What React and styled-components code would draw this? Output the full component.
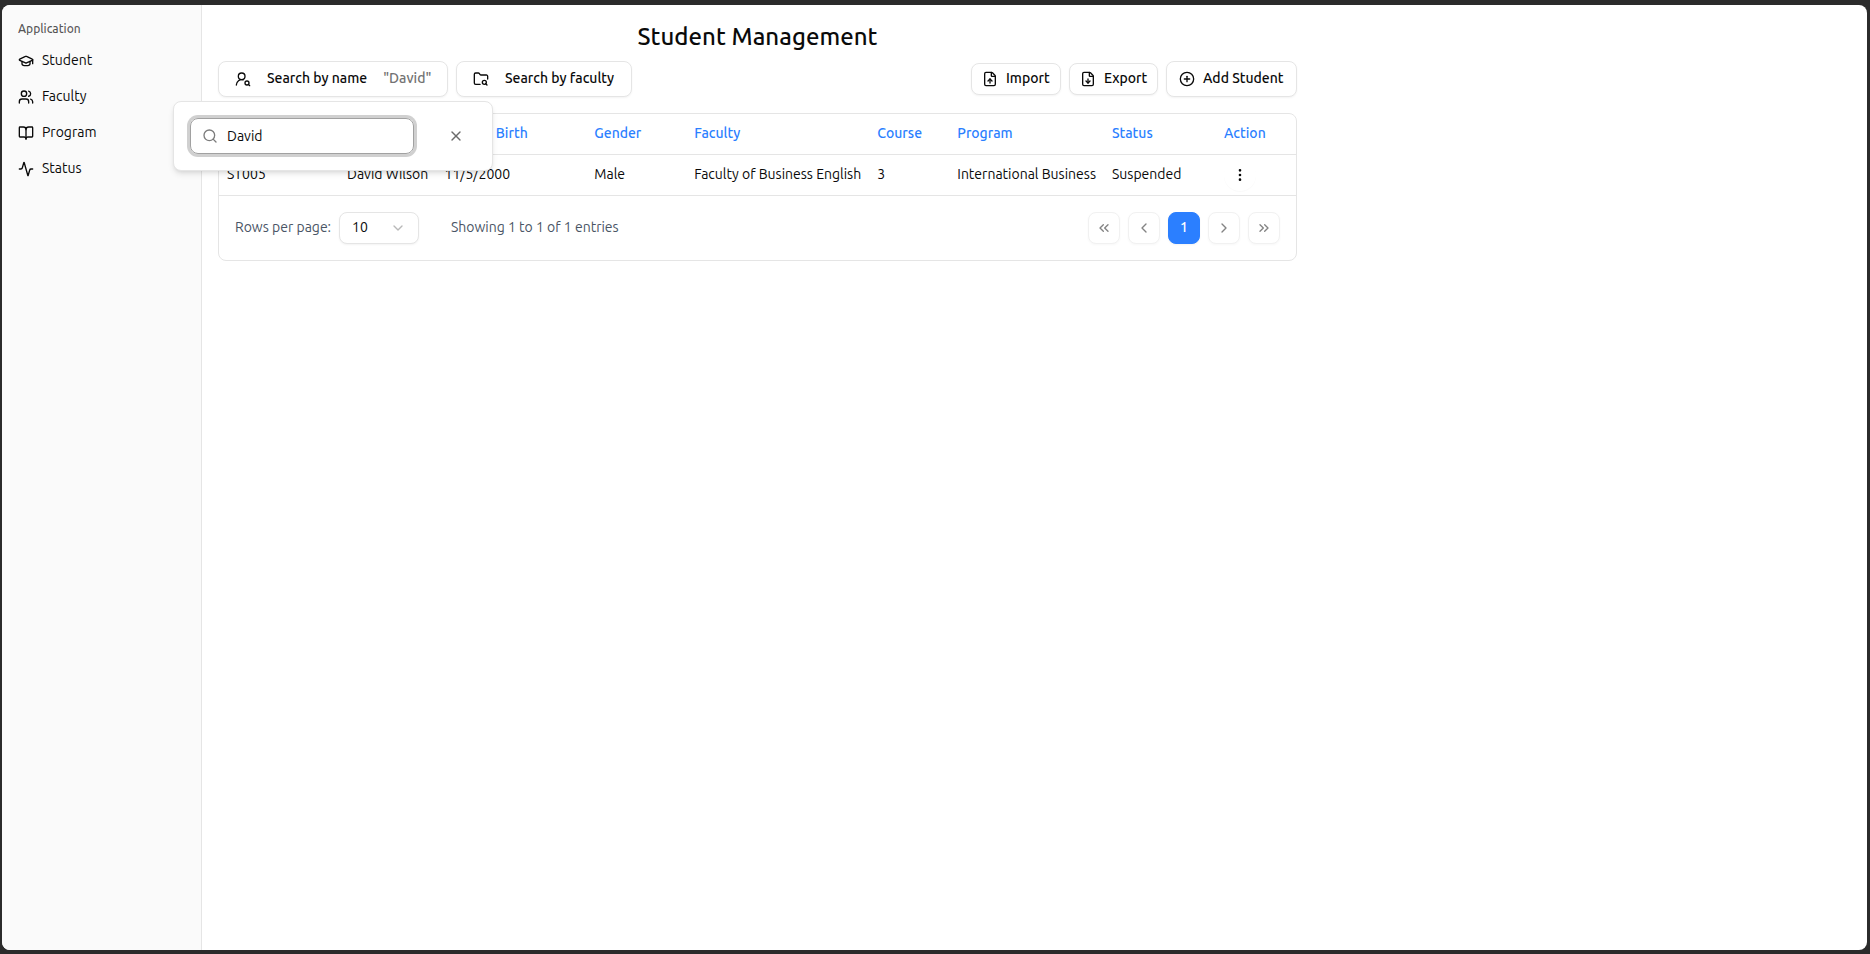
import React from "react";
import styled, { createGlobalStyle } from "styled-components";
import {
  GraduationCap, Users, BookOpen, Activity, UserRoundSearch, FolderSearch,
  FileUp, FileDown, CirclePlus, EllipsisVertical, ChevronsLeft, ChevronLeft,
  ChevronRight, ChevronsRight, ChevronDown, Search, X,
} from "lucide-react";

const Global = createGlobalStyle`
  *, *::before, *::after { box-sizing: border-box; }
  html, body, #root { height: 100%; }
  body {
    margin: 0;
    overflow: hidden;
    background: #2b2b2b;
    color: #0a0a0a;
    font-family: Ubuntu, "Noto Sans", sans-serif;
    font-size: 14px;
    line-height: 20px;
  }
  button, input { font: inherit; color: inherit; margin: 0; }
  svg { flex-shrink: 0; display: block; }
`;

const Frame = styled.div`
  height: 954px;
  padding: 5px 3px 4px 2px;
`;

const Window = styled.div`
  display: flex;
  height: 100%;
  overflow: hidden;
  background: #fff;
  border-radius: 8px;
`;

const Sidebar = styled.aside`
  width: 200px;
  padding: 8px;
  background: #fafafa;
  border-right: 1px solid #e5e5e5;
`;

const SidebarLabel = styled.div`
  height: 32px;
  padding: 0 8px;
  line-height: 32px;
  font-size: 12px;
  font-weight: 500;
  color: rgba(10, 10, 10, 0.7);
`;

const Nav = styled.nav`
  display: flex;
  flex-direction: column;
  gap: 4px;
`;

const NavItem = styled.a`
  display: flex;
  align-items: center;
  gap: 8px;
  height: 32px;
  padding: 0 8px;
`;

const Label = styled.span`
  display: block;
  padding-bottom: 2px;
  white-space: nowrap;
  color: ${(p) => p.$color || "inherit"};
  font-weight: ${(p) => p.$weight || 400};
`;

const Main = styled.main`
  width: 1111px;
  padding: 16px;
`;

const Title = styled.h1`
  margin: 0 0 8px;
  font-size: 24px;
  font-weight: 540;
  letter-spacing: 0.04px;
  line-height: 32px;
  text-align: center;
`;

const Toolbar = styled.div`
  display: flex;
  justify-content: space-between;
  align-items: center;
  margin-bottom: 16px;
`;

const Group = styled.div`
  display: flex;
  align-items: center;
  gap: 8px;
`;

const Button = styled.button`
  display: flex;
  align-items: center;
  gap: ${(p) => p.$gap || 8}px;
  width: ${(p) => p.$w}px;
  height: ${(p) => p.$h || 36}px;
  padding: 0 ${(p) => p.$pad}px;
  background: #fff;
  border: 1px solid #e5e5e5;
  border-radius: 8px;
  box-shadow: 0 1px 2px rgba(0, 0, 0, 0.05);
`;

const Card = styled.section`
  border: 1px solid #e5e5e5;
  border-radius: 8px;
`;

const Row = styled.div`
  display: grid;
  grid-template-columns: 120px 97.5px 149.8px 100px 183px 80px 154.7px 112px 1fr;
  align-items: center;
  height: 41px;
  border-bottom: 1px solid #e5e5e5;
  color: ${(p) => (p.$head ? "#2b7fff" : "inherit")};
`;

const Cell = styled.div`
  padding: 0 8px;
  min-width: 0;
`;

const RoundButton = styled.button`
  display: grid;
  place-items: center;
  width: 32px;
  height: 32px;
  padding: 0;
  border: 0;
  border-radius: 50%;
  background: #fff;
  box-shadow: 0 1px 1px rgba(0, 0, 0, 0.025);
`;

const Footer = styled.footer`
  display: flex;
  justify-content: space-between;
  align-items: center;
  height: 64px;
  padding: 0 16px;
  color: #4a5565;
`;

const Caption = styled.div`
  width: 96px;
`;

const Select = styled.button`
  display: flex;
  align-items: center;
  justify-content: space-between;
  width: 80px;
  height: 32px;
  margin-right: 24px;
  padding: 0 12px;
  background: #fff;
  color: #0a0a0a;
  border: 1px solid #e5e5e5;
  border-radius: 8px;
  box-shadow: 0 1px 2px rgba(0, 0, 0, 0.05);
  svg { opacity: 0.5; color: #737373; }
`;

const PageButton = styled.button`
  display: grid;
  place-items: center;
  width: 32px;
  height: 32px;
  padding: 0;
  border-radius: 8px;
  border: 1px solid ${(p) => (p.$active ? "#2b7fff" : "#e5e5e5")};
  background: ${(p) => (p.$active ? "#2b7fff" : "#fff")};
  color: ${(p) => (p.$active ? "#fff" : "#0a0a0a")};
  opacity: ${(p) => (p.$active ? 1 : 0.5)};
  box-shadow: 0 1px 2px rgba(0, 0, 0, 0.05);
`;

const Popover = styled.div`
  position: absolute;
  left: 173px;
  top: 101px;
  display: flex;
  align-items: center;
  width: 320px;
  height: 70px;
  padding: 16px;
  background: #fff;
  border: 1px solid #e5e5e5;
  border-radius: 8px;
  box-shadow: 0 4px 6px -1px rgba(0, 0, 0, 0.1), 0 2px 4px -2px rgba(0, 0, 0, 0.1);
`;

const Field = styled.div`
  display: flex;
  align-items: center;
  gap: 9px;
  width: 224px;
  height: 36px;
  padding: 0 11px;
  border: 1px solid #a1a1a1;
  border-radius: 8px;
  box-shadow: 0 0 0 3px rgba(161, 161, 161, 0.5);
  svg { color: #7c7c7c; }
`;

const FieldValue = styled.span`
  white-space: nowrap;
`;

const Clear = styled.button`
  display: grid;
  place-items: center;
  width: 40px;
  height: 36px;
  margin-left: 22px;
  padding: 0;
  border: 0;
  background: none;
  color: #6b6b6b;
`;

const nav = [
  [GraduationCap, "Student"],
  [Users, "Faculty"],
  [BookOpen, "Program"],
  [Activity, "Status"],
];

const columns = [
  ["ID", "ST005"],
  ["Name", "David Wilson"],
  ["Date of Birth", "11/5/2000"],
  ["Gender", "Male"],
  ["Faculty", "Faculty of Business English"],
  ["Course", "3"],
  ["Program", "International Business"],
  ["Status", "Suspended"],
];

export default function App() {
  return (
    <>
      <Global />
      <Frame>
        <Window>
          <Sidebar>
            <SidebarLabel>Application</SidebarLabel>
            <Nav>
              {nav.map(([Icon, text]) => (
                <NavItem key={text}>
                  <Icon size={16} />
                  <Label>{text}</Label>
                </NavItem>
              ))}
            </Nav>
          </Sidebar>
          <Main>
            <Title>Student Management</Title>
            <Toolbar>
              <Group>
                <Button $w={230} $pad={16} $gap={16}>
                  <UserRoundSearch size={16} />
                  <Label $weight={500}>Search by name</Label>
                  <Label $weight={500} $color="#737373">"David"</Label>
                </Button>
                <Button $w={176} $pad={16} $gap={16}>
                  <FolderSearch size={16} />
                  <Label $weight={500}>Search by faculty</Label>
                </Button>
              </Group>
              <Group>
                <Button $w={90} $h={32} $pad={10}>
                  <FileUp size={16} />
                  <Label $weight={500}>Import</Label>
                </Button>
                <Button $w={89} $h={32} $pad={10}>
                  <FileDown size={16} />
                  <Label $weight={500}>Export</Label>
                </Button>
                <Button $w={131} $pad={12}>
                  <CirclePlus size={16} />
                  <Label $weight={500}>Add Student</Label>
                </Button>
              </Group>
            </Toolbar>
            <Card>
              <Row $head>
                {columns.map(([head]) => (
                  <Cell key={head}><Label $weight={500}>{head}</Label></Cell>
                ))}
                <Cell><Label $weight={500}>Action</Label></Cell>
              </Row>
              <Row>
                {columns.map(([head, value]) => (
                  <Cell key={head}><Label>{value}</Label></Cell>
                ))}
                <Cell><RoundButton><EllipsisVertical size={16} /></RoundButton></Cell>
              </Row>
              <Footer>
                <Group>
                  <Caption><Label>Rows per page:</Label></Caption>
                  <Select><Label>10</Label><ChevronDown size={16} /></Select>
                  <Label>Showing 1 to 1 of 1 entries</Label>
                </Group>
                <Group>
                  <PageButton><ChevronsLeft size={16} /></PageButton>
                  <PageButton><ChevronLeft size={16} /></PageButton>
                  <PageButton $active><Label $weight={500}>1</Label></PageButton>
                  <PageButton><ChevronRight size={16} /></PageButton>
                  <PageButton><ChevronsRight size={16} /></PageButton>
                </Group>
              </Footer>
            </Card>
          </Main>
        </Window>
        <Popover>
          <Field>
            <Search size={16} />
            <FieldValue>David</FieldValue>
          </Field>
          <Clear><X size={16} /></Clear>
        </Popover>
      </Frame>
    </>
  );
}
